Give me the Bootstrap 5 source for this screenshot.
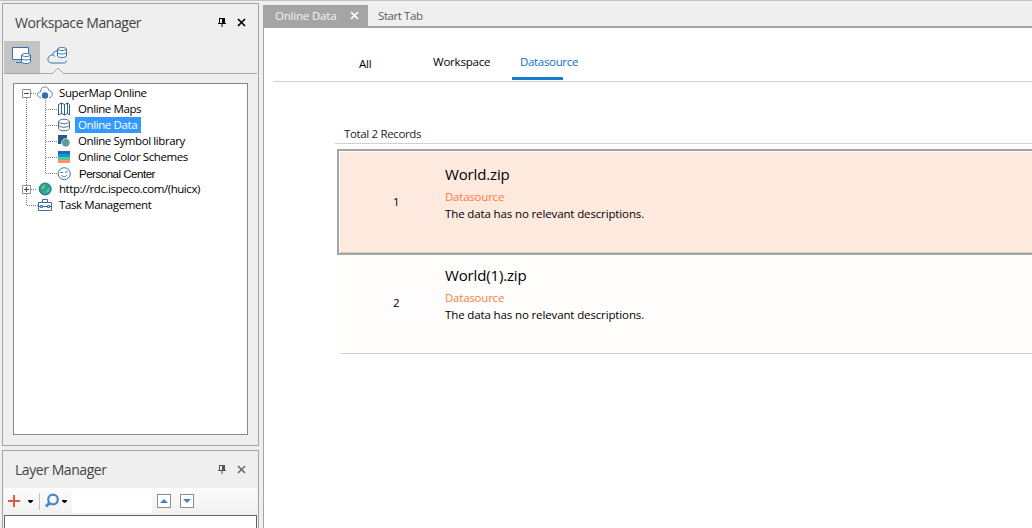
<!DOCTYPE html>
<html lang="en">
<head>
<meta charset="utf-8">
<title>Workspace Manager</title>
<link href="https://cdn.jsdelivr.net/npm/bootstrap@5.3.0/dist/css/bootstrap.min.css" rel="stylesheet">
<style>
body{background:#efefef;font-family:"Open Sans","Noto Sans",sans-serif;font-size:11.5px;line-height:16px;color:#000;height:528px;overflow:hidden;border-top:1px solid #c3c3c3}
svg{display:block;flex:none}
.side{width:263px;padding:2px 4px 0 2px;gap:4px}
.dock{border:1px solid #a5a5a5;background:#efefef}
.dock-ws{height:443px}
.dock-ly{height:90px}
.dock-head{height:37px;padding:0 12px}
.dock-title{font-size:14px;line-height:20px;color:#444;letter-spacing:-.44px}
.pins{gap:11px}
.ws-tabs{height:33px;margin:0 1px;border-bottom:1px solid #a5a5a5}
.ws-tab{width:36px;height:32px}
.ws-tab.on{background:#c3c3c3}
.tree{width:235px;height:352px;margin:9px 0 0 10px;border:1px solid #828790;background:#fff;padding-top:1px;letter-spacing:-.4px}
.tree-row{height:16px}
.tree-row .ico{width:16px;height:16px}
.root{padding-left:23px}
.kid{padding-left:42px}
.root .lbl{padding:0 3px 0 6px}
.kid .lbl{padding:0 4px 0 3px;margin-left:3px}
.lbl.sel{background:#3399ff;color:#fff}
.url{letter-spacing:-.45px}
.arial{font-family:"Liberation Sans",sans-serif;font-size:11.5px;letter-spacing:-.48px;position:relative;left:1px;top:1px}
.tools{height:27px;margin:0 1px;background:linear-gradient(#fdfdfd,#f0f0f0)}
.find{width:80px;height:23px;margin-top:2px;background:#fff}
.sq{width:14px;height:14px;margin:6px 4px 0 5px;border:1px solid #8c8c8c;background:#fff}
.ly-list{height:40px;margin:0 1px;border:1px solid #646464;background:#fff}
.doc-tabs{height:27px;padding-top:4px;border-bottom:2px solid #a5a5a5}
.doc-tab{height:21px;line-height:21px;color:#5c5c5c;padding:0 10px;letter-spacing:-.42px}
.doc-tab.on{background:#a5a5a5;color:#f4f4f4;width:105px;padding:0 9px 0 12px;letter-spacing:-.2px}
.doc{background:#fff;border-left:1px solid #a5a5a5;padding-left:9px}
.filters{height:54px;border-bottom:1px solid #d0d0d0;letter-spacing:-.22px}
.f-all{width:160px;padding:28px 0 0 86px}
.f-ws{width:79px;padding-top:26px}
.f-ds{color:#0a6fd0;padding-top:26px;letter-spacing:-.33px}
.f-ds span{padding-left:8px}
.bar{width:51px;height:3px;margin-top:7px;background:#1979ca}
.total{margin:44px 0 0 62px;height:18px;border-bottom:1px solid #d0d0d0;padding-left:9px;color:#1e1e28;line-height:15px;letter-spacing:-.35px}
.rec-1{margin:5px 0 0 64px;height:106px;border:2px solid #a5a5a5;border-right:0;padding:1px 0 0 1px;background:#fff}
.rec-in{background:#fee9df;height:100%;border-bottom:1px solid #cfc9c6}
.rec-2{margin-left:67px;height:99px;background:#fefdfc;border-bottom:1px solid #d0d0d0}
.num{width:105px;padding-left:53px}
.rec-2 .num{padding-bottom:2px}
.rec-in .info{padding-top:8px}
.rec-2 .info{padding-top:6px}
.r-name{font-size:15px;line-height:28px;letter-spacing:-.15px}
.r-type{color:#fb7d3c;line-height:17px;letter-spacing:-.22px}
.r-desc{line-height:17px;letter-spacing:-.13px}
</style>
</head>
<body class="d-flex">
<aside class="side d-flex flex-column flex-shrink-0">
  <section class="dock dock-ws flex-shrink-0">
    <header class="dock-head d-flex align-items-center justify-content-between">
      <span class="dock-title">Workspace Manager</span>
      <span class="d-flex pins align-items-center">
        <svg width="8" height="9" fill="#000"><path d="M1 0h6v5h1v1H4.500V9h-1V6H0V5h1zM2 1v4h2V1z" fill-rule="evenodd"/></svg>
        <svg width="9" height="9" stroke="#000" stroke-width="1.700"><path d="M1 1l7 7M8 1L1 8"/></svg>
      </span>
    </header>
    <nav class="ws-tabs d-flex">
      <span class="ws-tab on"><svg width="36" height="32" fill="none" stroke="#3470b0"><path d="M18 18.500H8.500v-12h16V12M12 21.500h6"/><path fill="#fff" d="M9 7h15v6h-6v5H9z" stroke="none"/><path fill="#fff" d="M17.500 14v7c1 2 8 2 9 0v-7c-1-2-8-2-9 0c1 2 8 2 9 0M17.500 17.500c1 2 8 2 9 0"/></svg></span>
      <span class="ws-tab"><svg width="36" height="33" fill="none" stroke="#3470b0"><path d="M26.500 19.500c0 2-1 2.500-3 2.500H12c-6 0-5-8 .5-8c.5-3 2-4 4.500-4M12.500 14c1 0 2 .5 2.500 1.500"/><path fill="#fff" d="M17.500 8v7c1 2 8 2 9 0V8c-1-2-8-2-9 0c1 2 8 2 9 0M17.500 11.500c1 2 8 2 9 0"/><path d="M12 33l6-6l6 6" fill="#efefef" stroke="#a5a5a5"/></svg></span>
    </nav>
    <div class="tree position-relative">
      <svg class="position-absolute top-0 start-0" width="60" height="140" fill="none" stroke="#808080" stroke-dasharray="1 1"><path d="M12.500 14v107M31.500 16v74M17 9.500h6M32 25.500h11M32 41.500h11M32 57.500h11M32 73.500h11M32 89.500h11M17 105.500h6M13 121.500h11"/><g stroke-dasharray="none" fill="#fff" stroke="#919191"><path d="M8.500 5.500h8v8h-8zM8.500 101.500h8v8h-8z"/><path stroke="#2b4a80" d="M10 9.500h5M10 105.500h5M12.500 103v5"/></g></svg>
      <div class="tree-row root d-flex"><svg class="ico" fill="none" stroke="#5a84b5"><path d="M4 12.500C-.5 12.500-.5 7 3.500 7C3.500 .5 11 .5 12 5.500C16.500 6 16.500 12.500 12 12.500"/><circle cx="8" cy="10.500" r="3.200" fill="#2f6eb5" stroke="none"/></svg><span class="lbl">SuperMap Online</span></div>
      <div class="tree-row kid d-flex"><svg class="ico" fill="none" stroke="#34608f"><path d="M2.500 3.500l3-1.500l3 1.500l3-1.500l2 1.500v10.500l-2-1.500l-3 1.500l-3-1.500l-3 1.500zM5.500 2v11M8.500 3.500V14M11.500 2v11"/></svg><span class="lbl">Online Maps</span></div>
      <div class="tree-row kid d-flex"><svg class="ico" fill="none" stroke="#4b7199"><path d="M2.500 4.500v7c1 3 10 3 11 0v-7c-1-3-10-3-11 0c1 3 10 3 11 0M2.500 8c1 3 10 3 11 0"/></svg><span class="lbl sel">Online Data</span></div>
      <div class="tree-row kid d-flex"><svg class="ico"><path fill="#27598c" d="M2 2h9v4H7.500L5 11H2z"/><circle cx="9.800" cy="9.700" r="4.200" fill="#5f9a98" stroke="#fff" stroke-width=".6"/></svg><span class="lbl">Online Symbol library</span></div>
      <div class="tree-row kid d-flex"><svg class="ico"><path fill="#2166c6" d="M2 2h12v3H2z"/><path fill="#069fcf" d="M2 5h12v3H2z"/><path fill="#5cc795" d="M2 8h12v3H2z"/><path fill="#ff9466" d="M2 11h12v3H2z"/></svg><span class="lbl">Online Color Schemes</span></div>
      <div class="tree-row kid d-flex"><svg class="ico" fill="none" stroke="#3f76a8"><circle cx="8.200" cy="8.700" r="6"/><path d="M4.500 7.500h2.500M9 7.500l2.500-1M5.500 10c1.500 2.500 4 2.500 5.500 0"/></svg><span class="lbl"><span class="arial">Personal Center</span></span></div>
      <div class="tree-row root d-flex"><svg class="ico"><circle cx="8.200" cy="8" r="6" fill="#2b9d94" stroke="#226b9d"/><path d="M4.500 5l3-2l1 3l-2 2.500l-2-.5zM9.500 9l3-3v4l-3 2zM6 11l2-1v2z" fill="#5dc58c"/></svg><span class="lbl url">http://rdc.ispeco.com/(huicx)</span></div>
      <div class="tree-row root d-flex"><svg class="ico" fill="none" stroke="#3470a0"><path d="M1.500 5.500h13v8h-13zM5.500 5.500v-3h5v3M1.500 9.500h13"/><path fill="#fff" d="M3.500 8.500h2v2h-2zM10.500 8.500h2v2h-2z"/></svg><span class="lbl">Task Management</span></div>
    </div>
  </section>
  <section class="dock dock-ly flex-shrink-0">
    <header class="dock-head d-flex align-items-center justify-content-between">
      <span class="dock-title">Layer Manager</span>
      <span class="d-flex pins align-items-center">
        <svg width="8" height="9" fill="#555"><path d="M1 0h6v5h1v1H4.500V9h-1V6H0V5h1zM2 1v4h2V1z" fill-rule="evenodd"/></svg>
        <svg width="9" height="9" stroke="#666" stroke-width="1.500"><path d="M1 1l7 7M8 1L1 8"/></svg>
      </span>
    </header>
    <div class="tools d-flex">
      <svg width="68" height="27"><path d="M4 13h12M10 7v12" stroke="#de5b41" stroke-width="2"/><path d="M24 12h5v1l-2 2h-1l-2-2z"/><path d="M35.500 5v17" stroke="#c3c3c3"/><circle cx="49" cy="11.500" r="4.800" fill="none" stroke="#4787c7" stroke-width="2.200"/><path d="M45.500 15L42 18.500" stroke="#4787c7" stroke-width="3"/><path d="M58 12h5v1l-2 2h-1l-2-2z"/></svg>
      <span class="find"></span>
      <span class="sq d-flex"><svg width="12" height="12"><path d="M2 8l4-4l4 4z" fill="#3f86cc"/></svg></span>
      <span class="sq d-flex"><svg width="12" height="12"><path d="M2 4h8l-4 4z" fill="#3f86cc"/></svg></span>
    </div>
    <div class="ly-list"></div>
  </section>
</aside>
<main class="d-flex flex-column flex-grow-1">
  <nav class="doc-tabs d-flex">
    <span class="doc-tab on d-flex align-items-center justify-content-between"><span>Online Data</span><svg width="9" height="9" stroke="#fff" stroke-width="1.700"><path d="M1 1l7 7M8 1L1 8"/></svg></span>
    <span class="doc-tab">Start Tab</span>
  </nav>
  <div class="doc flex-grow-1">
    <nav class="filters d-flex">
      <div class="f-all">All</div>
      <div class="f-ws">Workspace</div>
      <div class="f-ds"><span>Datasource</span><div class="bar"></div></div>
    </nav>
    <div class="total">Total 2 Records</div>
    <div class="rec-1"><div class="rec-in d-flex">
      <div class="num align-self-center">1</div>
      <div class="info"><div class="r-name">World.zip</div><div class="r-type">Datasource</div><div class="r-desc">The data has no relevant descriptions.</div></div>
    </div></div>
    <div class="rec-2 d-flex">
      <div class="num align-self-center">2</div>
      <div class="info"><div class="r-name">World(1).zip</div><div class="r-type">Datasource</div><div class="r-desc">The data has no relevant descriptions.</div></div>
    </div>
  </div>
</main>
<script src="https://cdn.jsdelivr.net/npm/bootstrap@5.3.0/dist/js/bootstrap.bundle.min.js"></script>
</body>
</html>
